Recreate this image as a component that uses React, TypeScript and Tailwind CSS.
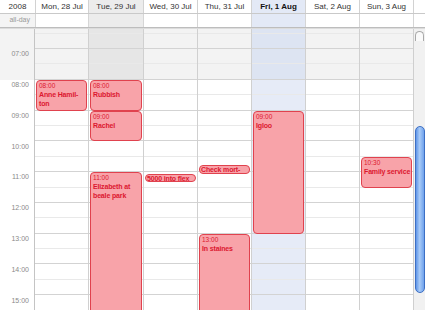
import React from 'react';

type CalEvent = {
  start: number;
  end: number;
  time?: string;
  title: string[];
  compact?: boolean;
};

type Day = {
  label: string;
  width: string;
  kind?: 'past' | 'today';
  events: CalEvent[];
};

const HOUR = 30.8;
const yOf = (t: number) => 20 + (t - 7) * HOUR;

const days: Day[] = [
  { label: 'Mon, 28 Jul', width: 'w-[53px]', events: [{ start: 8, end: 9, time: '08:00', title: ['Anne Hamil-', 'ton'] }] },
  {
    label: 'Tue, 29 Jul',
    width: 'w-[55px]',
    kind: 'past',
    events: [
      { start: 8, end: 9, time: '08:00', title: ['Rubbish'] },
      { start: 9, end: 10, time: '09:00', title: ['Rachel'] },
      { start: 11, end: 17, time: '11:00', title: ['Elizabeth at', 'beale park'] },
    ],
  },
  { label: 'Wed, 30 Jul', width: 'w-[54px]', events: [{ start: 11.05, end: 11.32, title: ['5000 into flex'], compact: true }] },
  {
    label: 'Thu, 31 Jul',
    width: 'w-[54px]',
    events: [
      { start: 10.76, end: 11.05, title: ['Check mort-'], compact: true },
      { start: 13, end: 17, time: '13:00', title: ['In staines'] },
    ],
  },
  { label: 'Fri, 1 Aug', width: 'w-[54px]', kind: 'today', events: [{ start: 9, end: 13, time: '09:00', title: ['Igloo'] }] },
  { label: 'Sat, 2 Aug', width: 'w-[54px]', events: [] },
  { label: 'Sun, 3 Aug', width: 'w-[54px]', events: [{ start: 10.5, end: 11.5, time: '10:30', title: ['Family service'] }] },
];

// half-hour slots from 06:00 to 16:00
const slots = Array.from({ length: 20 }, (_, i) => 6 + i * 0.5);
const hours = [7, 8, 9, 10, 11, 12, 13, 14, 15];

function slotBg(t: number, kind?: Day['kind']) {
  const early = t < 8;
  if (kind === 'today') return early ? 'bg-[#dde4f2]' : 'bg-[#e6ebf7]';
  if (kind === 'past') return early ? 'bg-[#e6e6e6]' : 'bg-white';
  return early ? 'bg-[#f3f3f3]' : 'bg-white';
}

function EventBox({ ev }: { ev: CalEvent }) {
  const top = yOf(ev.start);
  const height = yOf(ev.end) - top;
  return (
    <div
      className={`absolute left-[1px] right-[1px] overflow-hidden rounded-[4px] border border-[#e0424e] bg-[#f8a3a9] text-[#dc1830] ${
        ev.compact ? 'px-[1px]' : 'px-[2px] pt-[1px]'
      }`}
      style={{ top, height }}
    >
      {ev.time && <div className="text-[6.5px] leading-[8px]">{ev.time}</div>}
      {ev.title.map((line) => (
        <div
          key={line}
          className={`whitespace-nowrap text-[7px] font-bold tracking-[-0.15px] ${ev.compact ? 'leading-[7px]' : 'leading-[9px]'}`}
        >
          {line}
        </div>
      ))}
    </div>
  );
}

export default function App() {
  return (
    <div className="flex h-[310px] w-[425px] flex-col overflow-hidden bg-white font-['Liberation_Sans',sans-serif] text-[#333]">
      {/* header */}
      <div className="flex h-[14px] border-b border-[#c9c9c9]">
        <div className="flex w-[35px] items-center justify-center text-[8px]">2008</div>
        {days.map((d) => (
          <div
            key={d.label}
            className={`${d.width} flex items-center justify-center border-l border-[#d2d2d2] text-[8px] ${
              d.kind === 'today' ? 'bg-[#e3e9f6] font-bold text-[#111]' : d.kind === 'past' ? 'bg-[#ececec]' : ''
            }`}
          >
            {d.label}
          </div>
        ))}
        <div className="w-[12px] border-l border-[#d2d2d2]" />
      </div>

      {/* all-day row */}
      <div className="flex h-[13px]">
        <div className="flex w-[35px] items-center justify-end bg-[#f4f4f4] pr-[5px] text-[7px] text-[#999]">all-day</div>
        {days.map((d) => (
          <div
            key={d.label}
            className={`${d.width} border-l border-[#d6d6d6] ${
              d.kind === 'today' ? 'bg-[#e3e9f6]' : d.kind === 'past' ? 'bg-[#ececec]' : 'bg-white'
            }`}
          />
        ))}
        <div className="w-[12px] border-l border-[#d6d6d6]" />
      </div>
      <div className="h-[2px] border-t border-[#bdbdbd] bg-[#dcdcdc]" />

      {/* body */}
      <div className="flex min-h-0 flex-1">
        <div className="w-[35px] overflow-hidden border-r border-[#c4c4c4] bg-white">
          <div className="h-[20px] bg-[#f3f3f3]" />
          <div className="h-[30.8px] bg-[#f3f3f3]" />
          <div className="-mt-[45.4px] flex flex-col pt-[4.6px]">
            {hours.map((h) => (
              <div key={h} className="flex h-[30.8px] shrink-0 items-center justify-end pr-[5px] text-[7px] text-[#8a8a8a]">
                {String(h).padStart(2, '0')}:00
              </div>
            ))}
          </div>
        </div>

        {days.map((d, di) => (
          <div key={d.label} className={`${d.width} relative overflow-hidden ${di > 0 ? 'border-l border-[#d0d0d0]' : ''}`}>
            <div className="-mt-[10.8px] flex flex-col">
              {slots.map((t) => (
                <div
                  key={t}
                  className={`h-[15.4px] shrink-0 border-b ${slotBg(t, d.kind)} ${
                    (t * 2) % 2 === 1 ? 'border-[#d3d3d3]' : 'border-[#e9e9e9]'
                  }`}
                />
              ))}
            </div>
            {d.events.map((ev) => (
              <EventBox key={ev.title[0]} ev={ev} />
            ))}
          </div>
        ))}

        {/* scrollbar */}
        <div className="flex w-[12px] flex-col items-center border-l border-[#cfcfcf] bg-[#f1f1f1]">
          <div className="mt-[2px] h-[10px] w-[9px] rounded-t-full border-x border-t border-[#a8a8a8] bg-[#fafafa]" />
          <div className="mt-[85px] h-[167px] w-[10px] rounded-full border border-[#3d6fc4] bg-[linear-gradient(90deg,#5f95e8,#a9cbf7_45%,#6ea1ec)]" />
        </div>
      </div>
    </div>
  );
}
